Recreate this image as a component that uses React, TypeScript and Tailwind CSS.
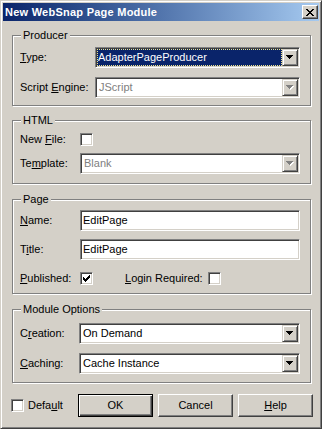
import type { ReactNode } from "react";

// classic win2000 bevels
const sunken =
  "border border-t-[#808080] border-l-[#808080] border-r-white border-b-white shadow-[inset_1px_1px_0_#404040,inset_-1px_-1px_0_#d4d0c8]";
const raised =
  "border border-t-[#d4d0c8] border-l-[#d4d0c8] border-r-[#404040] border-b-[#404040] shadow-[inset_1px_1px_0_#fff,inset_-1px_-1px_0_#808080]";

function U({ children }: { children: ReactNode }) {
  return <span className="underline underline-offset-[1px]">{children}</span>;
}

function Arrow({ disabled }: { disabled?: boolean }) {
  const rows = [7, 5, 3, 1];
  return (
    <svg width="8" height="5" viewBox="0 0 8 5" shapeRendering="crispEdges">
      {disabled &&
        rows.map((w, i) => (
          <rect key={"s" + i} x={i + 1} y={i + 1} width={w} height="1" fill="#fff" />
        ))}
      {rows.map((w, i) => (
        <rect key={i} x={i} y={i} width={w} height="1" fill={disabled ? "#808080" : "#000"} />
      ))}
    </svg>
  );
}

function Combo({
  value,
  width,
  disabled,
  selected,
}: {
  value: string;
  width: string;
  disabled?: boolean;
  selected?: boolean;
}) {
  return (
    <div className={`${width} h-[21px] flex bg-white p-[1px] ${sunken}`}>
      <div className="flex-1 flex items-center min-w-0">
        {selected ? (
          <div className="h-full flex-1 flex items-center bg-[#0a246a] text-white pl-[1px] outline outline-1 outline-dotted outline-[#f0e68c] -outline-offset-1">
            {value}
          </div>
        ) : (
          <span className={`pl-[2px] ${disabled ? "text-[#808080]" : "text-black"}`}>{value}</span>
        )}
      </div>
      <div className={`w-[16px] h-[17px] shrink-0 flex items-center justify-center bg-[#d4d0c8] ${raised}`}>
        <Arrow disabled={disabled} />
      </div>
    </div>
  );
}

function Edit({ value }: { value: string }) {
  return (
    <div className={`w-[220px] h-[21px] flex items-center bg-white pl-[2px] ${sunken}`}>{value}</div>
  );
}

function Check({ checked }: { checked?: boolean }) {
  const cols = [2, 3, 4, 3, 2, 1, 0];
  return (
    <div className={`w-[13px] h-[13px] shrink-0 bg-white flex items-center justify-center ${sunken}`}>
      {checked && (
        <svg width="7" height="7" viewBox="0 0 7 7" shapeRendering="crispEdges">
          {cols.map((y, x) => (
            <rect key={x} x={x} y={y} width="1" height="3" fill="#000" />
          ))}
        </svg>
      )}
    </div>
  );
}

function Group({ title, className, children }: { title: string; className: string; children: ReactNode }) {
  return (
    <fieldset
      className={`ml-[9px] w-[299px] border border-[#808080] shadow-[inset_1px_1px_0_#fff,1px_1px_0_#fff] px-[7px] ${className}`}
    >
      <legend className="ml-[1px] px-[2px] h-[13px] leading-[13px] bg-[#d4d0c8]">{title}</legend>
      {children}
    </fieldset>
  );
}

function Button({ children, isDefault }: { children: ReactNode; isDefault?: boolean }) {
  const cls = isDefault
    ? "border border-black shadow-[inset_1px_1px_0_#fff,inset_-1px_-1px_0_#404040,inset_-2px_-2px_0_#808080]"
    : "border border-t-white border-l-white border-r-[#404040] border-b-[#404040] shadow-[inset_-1px_-1px_0_#808080]";
  return (
    <div className={`w-[75px] h-[23px] flex items-center justify-center bg-[#d4d0c8] ${cls}`}>{children}</div>
  );
}

function CloseGlyph() {
  const rows: [number, number][][] = [
    [[0, 2], [6, 2]],
    [[1, 2], [5, 2]],
    [[2, 4]],
    [[3, 2]],
    [[2, 4]],
    [[1, 2], [5, 2]],
    [[0, 2], [6, 2]],
  ];
  return (
    <svg width="8" height="7" viewBox="0 0 8 7" shapeRendering="crispEdges">
      {rows.map((segs, y) =>
        segs.map(([x, w], i) => <rect key={y + "-" + i} x={x} y={y} width={w} height="1" fill="#000" />)
      )}
    </svg>
  );
}

export default function App() {
  return (
    <div className="w-[322px] h-[429px] bg-[#d4d0c8] border border-t-[#d4d0c8] border-l-[#d4d0c8] border-r-[#404040] border-b-[#404040] shadow-[inset_1px_1px_0_#fff,inset_-1px_-1px_0_#808080] p-[2px] text-[11px] leading-[13px] text-black font-['Liberation_Sans',Arial,sans-serif]">
      {/* title bar */}
      <div className="h-[18px] flex items-center justify-between pl-[2px] pr-[1px] bg-linear-to-r from-[#0a246a] to-[#a6caf0]">
        <span className="font-bold text-white tracking-[0.25px]">New WebSnap Page Module</span>
        <div className={`w-[16px] h-[14px] flex items-center justify-center bg-[#d4d0c8] border border-t-white border-l-white border-r-[#404040] border-b-[#404040] shadow-[inset_-1px_-1px_0_#808080]`}>
          <CloseGlyph />
        </div>
      </div>

      <Group title="Producer" className="mt-[8px] h-[77px]">
        <div className="mt-[5px] flex items-center h-[21px]">
          <span className="w-[75px]">
            <U>T</U>ype:
          </span>
          <Combo value="AdapterPageProducer" width="w-[205px]" selected />
        </div>
        <div className="mt-[9px] flex items-center h-[21px]">
          <span className="w-[75px]">
            Script <U>E</U>ngine:
          </span>
          <Combo value="JScript" width="w-[205px]" disabled />
        </div>
      </Group>

      <Group title="HTML" className="mt-[8px] h-[70px]">
        <div className="mt-[6px] flex items-center h-[13px]">
          <span className="w-[60px]">
            New <U>F</U>ile:
          </span>
          <Check />
        </div>
        <div className="mt-[7px] flex items-center h-[21px]">
          <span className="w-[60px]">
            Te<U>m</U>plate:
          </span>
          <Combo value="Blank" width="w-[220px]" disabled />
        </div>
      </Group>

      <Group title="Page" className="mt-[9px] h-[101px]">
        <div className="mt-[4px] flex items-center h-[21px]">
          <span className="w-[60px]">
            <U>N</U>ame:
          </span>
          <Edit value="EditPage" />
        </div>
        <div className="mt-[8px] flex items-center h-[21px]">
          <span className="w-[60px]">
            T<U>i</U>tle:
          </span>
          <Edit value="EditPage" />
        </div>
        <div className="mt-[12px] flex items-center h-[13px]">
          <span className="w-[60px]">
            <U>P</U>ublished:
          </span>
          <Check checked />
          <span className="ml-[32px] w-[83px]">
            <U>L</U>ogin Required:
          </span>
          <Check />
        </div>
      </Group>

      <Group title="Module Options" className="mt-[9px] h-[80px]">
        <div className="mt-[7px] flex items-center h-[21px]">
          <span className="w-[59px]">
            C<U>r</U>eation:
          </span>
          <Combo value="On Demand" width="w-[221px]" />
        </div>
        <div className="mt-[9px] flex items-center h-[21px]">
          <span className="w-[59px]">
            <U>C</U>aching:
          </span>
          <Combo value="Cache Instance" width="w-[221px]" />
        </div>
      </Group>

      <div className="mt-[11px] flex items-center h-[23px]">
        <div className="w-[75px] flex items-center pl-[8px]">
          <Check />
          <span className="ml-[4px]">
            Defa<U>u</U>lt
          </span>
        </div>
        <div className="flex gap-[5px]">
          <Button isDefault>OK</Button>
          <Button>Cancel</Button>
          <Button>
            <span>
              <U>H</U>elp
            </span>
          </Button>
        </div>
      </div>
    </div>
  );
}
